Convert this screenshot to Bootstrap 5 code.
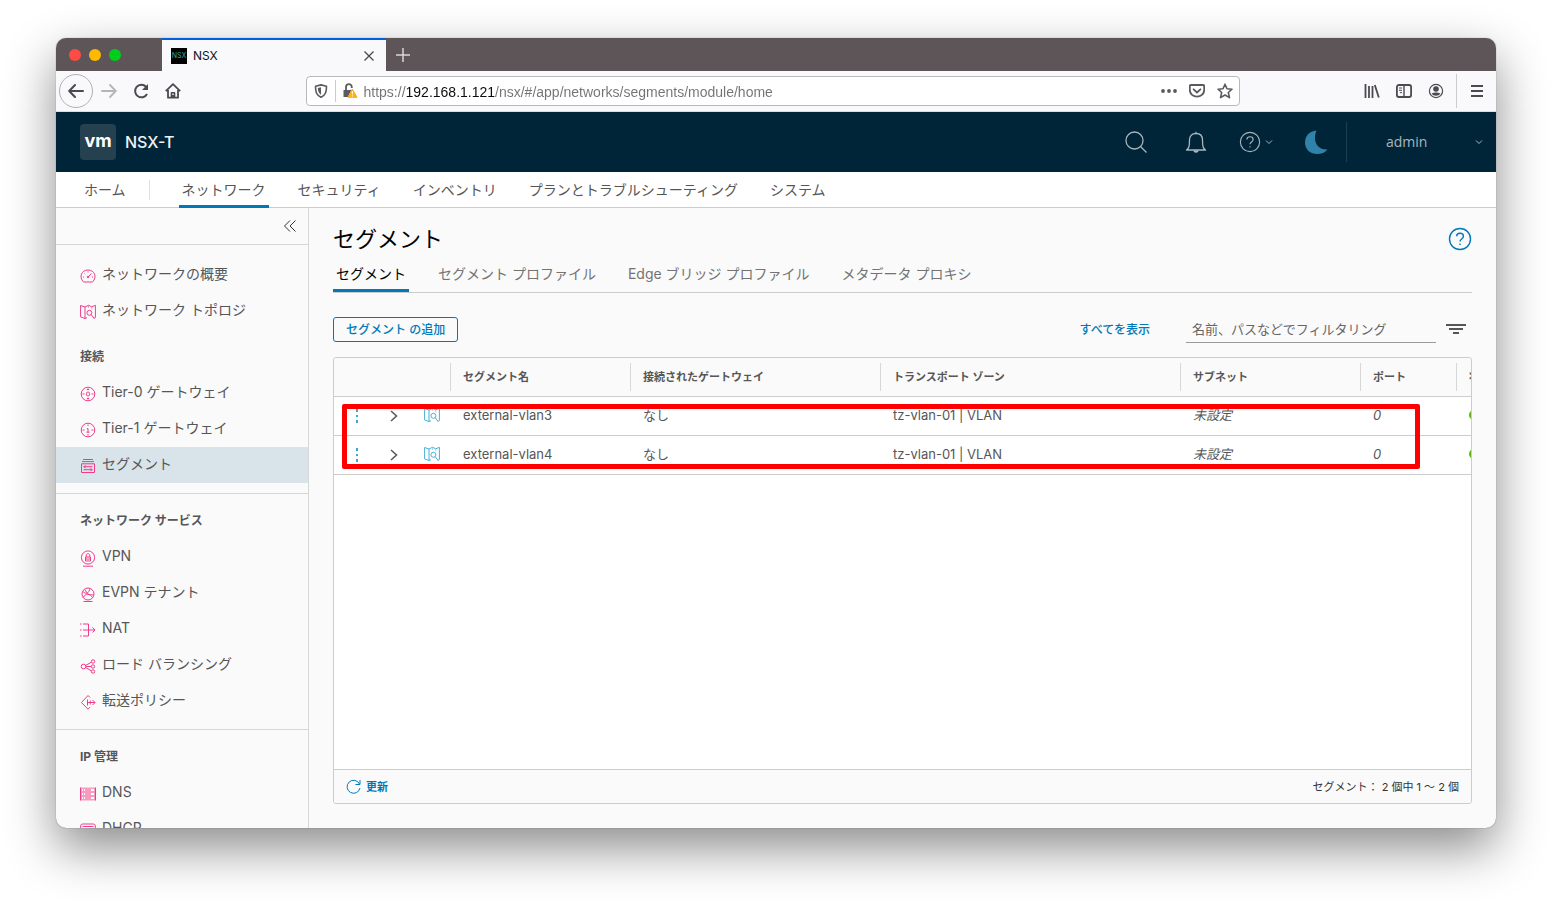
<!DOCTYPE html>
<html lang="ja">
<head>
<meta charset="utf-8">
<meta name="viewport" content="width=device-width, initial-scale=1">
<title>NSX</title>
<link href="https://cdn.jsdelivr.net/npm/bootstrap@5.3.0/dist/css/bootstrap.min.css" rel="stylesheet">
<style>
:root{--ink:#565656;--line:#ccc;--blue:#0079b8;--pink:#ee3d8b}
body{font-family:Inter,"Noto Sans CJK JP",sans-serif;font-size:14px;line-height:20px;color:var(--ink);background:#fff}
svg{display:block;flex:none;fill:none;stroke:currentColor}
svg.solid{stroke:none}
button{font-family:inherit}
.plain{background:none;border:0;padding:0;color:inherit;display:flex;align-items:center;justify-content:center}
.desktop{height:100vh;padding:38px 56px 74px}
.win{border-radius:10px;background:#fafafa;box-shadow:0 0 1px rgba(0,0,0,.6),0 20px 50px rgba(0,0,0,.46)}
.tabstrip,.tools,.masthead,.mainnav{flex:none}
.tabstrip{height:33px;background:#5d5557}
.lights{width:106px;padding-left:13px;gap:8px}
.lights button{width:12px;height:12px;border-radius:50%}
.red{background:#ff4b45}
.amber{background:#ffb900}
.green{background:#00ce1d}
.browser-tab{width:224px;background:#f9f9fb;border-top:2px solid #0060df;color:#15141a;font-size:12px;padding:0 10px 0 9px;gap:6px}
.browser-tab .plain{color:#4a4a4f}
.new-tab{width:33px;color:#d8d6d7}
.favicon{width:16px;height:16px;background:#000;color:#3aa99a;font-size:7px;line-height:16px;text-align:center}
.tools{height:41px;background:#f9f9fb;border-bottom:1px solid #ddd;color:#4a4a4f;padding:0 3px}
.tools .plain{width:32px;height:32px}
.tools .back{width:34px;height:34px;border:1px solid #b1b1b3;border-radius:50%}
.tools .forward{color:#b5b5b8}
.gapper{flex:1 1 0}
.urlbar{flex:8 1 0;min-width:0;height:30px;background:#fff;border:1px solid #b9b9bb;border-radius:4px}
.urlbar .plain{width:28px;height:28px;color:#5a5a5f}
.urlbar input{min-width:0;border:0;outline:0;padding:2px 0 0;font-family:"Liberation Sans",sans-serif;font-size:14px;line-height:26px;background:linear-gradient(90deg,#737373 43px,#0c0c0d 43px,#0c0c0d 131px,#737373 131px);-webkit-background-clip:text;background-clip:text;-webkit-text-fill-color:transparent}
.split{width:1px;background:var(--line)}
.urlbar .split{height:22px}
.tools .tall{height:34px}
.masthead{height:60px;background:#002538;color:#a9b6be;padding-left:24px}
.vm{width:36px;height:36px;border-radius:4px;background:#25404f;color:#fff;font-size:18px;line-height:34px;font-weight:700;text-align:center;margin-right:9px}
.product{font-size:16px;font-weight:500;color:#f0f3f4}
.masthead .icon-btn{width:60px;height:60px}
.user{width:150px;height:40px;border-left:1px solid #1c4053;padding:0 13px 0 39px;justify-content:space-between;font-family:"Open Sans",sans-serif}
.mainnav{height:36px;background:#fff;border-bottom:1px solid var(--line);padding-left:25px}
.strip{gap:26px}
.strip a{color:var(--ink);text-decoration:none;padding:0 3px;white-space:nowrap;border-bottom:3px solid transparent}
.mainnav .strip a{height:36px;line-height:35px}
.strip a.on{border-color:var(--blue)}
.mainnav .split{height:20px;margin:0 29px 0 20px;background:#e0e0e0}
.body-row{min-height:0}
.side{width:253px;border-right:1px solid #d7d7d7;flex:none;overflow:hidden}
.side .collapse-row{height:37px;border-bottom:1px solid #d7d7d7;padding-right:11px;margin-bottom:12px;color:#333}
.side section{padding-bottom:10px}
.side .ruled{border-top:1px solid #d7d7d7;padding-top:9px}
.side h2{font-size:12px;font-weight:700;line-height:36px;margin:0;padding-left:24px}
.side a{height:36px;line-height:34px;display:flex;gap:6px;padding-left:24px;color:var(--ink);text-decoration:none}
.side a svg{color:var(--pink);margin-top:11px}
.side a.on{background:#d9e4ea}
.content{padding:17px 24px 24px;min-width:0}
.content h1{font-size:22px;line-height:28px;color:#000;margin:0;font-weight:400}
.subtabs{border-bottom:1px solid var(--line);height:36px}
.subtabs a{line-height:34px;height:35px;color:#737373}
.subtabs a.on{color:#000}
.actions{height:25px;margin:24px 0 15px}
.btn-seg{height:25px;border:1px solid var(--blue);border-radius:3px;padding:0 12px;color:var(--blue);font-size:12px;line-height:22px;font-weight:500;background:none}
.show-all{font-size:12px;font-weight:500;color:var(--blue);text-decoration:none;margin-right:36px}
.filter{width:250px;height:26px;border:0;border-bottom:1px solid #9a9a9a;background:none;outline:0;padding:0 6px;font-size:13px}
.filter::placeholder{color:#666;opacity:1}
.help-link{color:var(--blue)}
.gridbox{border:1px solid var(--line);border-radius:3px;background:#fff;min-height:0}
.clip{overflow:hidden;border-radius:3px}
.seg-table{table-layout:fixed;width:100%;min-width:1222px;border-collapse:separate;border-spacing:0;font-size:13px}
.seg-table th{height:39px;background:#fafafa;border-bottom:1px solid var(--line);padding:0;font-size:11px;font-weight:700;white-space:nowrap}
.seg-table th span{display:block;height:28px;line-height:28px;padding-left:12px;border-left:1px solid #d7d7d7}
.seg-table td{height:39px;padding:0 0 2px 13px;border-bottom:1px solid var(--line);white-space:nowrap}
.seg-table td.tool{padding:0 0 1px}
.seg-table td.kind{padding:0 0 2px 16px;color:#49afd9}
.seg-table .plain{width:100%}
.seg-table .dots{color:#3ba7d4}
.pin{width:10px;height:10px;border-radius:50%;background:#60b515}
.c-act{width:46px}.c-exp{width:28px}.c-kind{width:42px}.c-mid{width:180px}.c-gw{width:250px}.c-tz{width:300px}.c-port{width:96px}
.gridfoot{height:34px;border-top:1px solid var(--line);background:#fafafa;padding:0 12px;font-size:11px;color:#313131;border-radius:0 0 3px 3px}
.gridfoot button{color:var(--blue);font-weight:600;gap:5px}
.callout{position:absolute;left:8px;right:51px;top:46px;height:65px;border:5px solid #f00;border-radius:2px;pointer-events:none}
</style>
</head>
<body>
<svg width="0" height="0" class="position-absolute" aria-hidden="true">
<symbol id="topo" viewBox="0 0 16 16"><path d="M.6 1.500 5 3v11.500L.6 12.900zM5 14.500l2-.8M5 3l3.500-1.700 3.300 1.500 3.600-1.500v12.200l-1 .4"/><path d="M8.500 1.500V4M11.800 3v2.500" stroke-opacity=".5"/><circle cx="9.400" cy="8.800" r="2.500"/><path d="m11.200 10.600 3.300 4.400"/></symbol>
<symbol id="help" viewBox="0 0 24 24"><circle cx="12" cy="12" r="10.500"/><path d="M8.600 9.300C8.700 7.400 10.100 6.300 12 6.300s3.400 1.200 3.400 3c0 2.700-3.400 2.600-3.400 5.200M12 16.500v1.600"/></symbol>
<symbol id="down" viewBox="0 0 8 6"><path d="m1 1.500 3 3 3-3"/></symbol>
<symbol id="kebab" viewBox="0 0 4 16"><path d="M1 1h2v3H1zM1 7h2v2H1zM1 12h2v3H1z" fill="currentColor"/></symbol>
<symbol id="expand" viewBox="0 0 10 12"><path d="m2 1 5.500 5L2 11"/></symbol>
</svg>
<div class="desktop">
<div class="win d-flex flex-column h-100 overflow-hidden">
  <div class="tabstrip d-flex">
    <div class="lights d-flex align-items-center">
      <button class="plain red" aria-label="閉じる"></button><button class="plain amber" aria-label="最小化"></button><button class="plain green" aria-label="最大化"></button>
    </div>
    <div class="browser-tab d-flex align-items-center">
      <span class="favicon">NSX</span><span class="me-auto">NSX</span>
      <button class="plain" aria-label="タブを閉じる"><svg width="14" height="14" viewBox="0 0 14 14" stroke-width="1.300"><path d="m2.500 2.500 9 9M11.500 2.500l-9 9"/></svg></button>
    </div>
    <button class="plain new-tab" aria-label="新しいタブ"><svg width="16" height="16" viewBox="0 0 16 16" stroke-width="1.500"><path d="M8 1v14M1 8h14"/></svg></button>
  </div>
  <div class="tools d-flex align-items-center">
    <button class="plain back" aria-label="戻る"><svg width="16" height="16" viewBox="0 0 16 16" stroke-width="2" stroke-linecap="round" stroke-linejoin="round"><path d="M15 8H1.500M7 2 1.200 8 7 14"/></svg></button>
    <button class="plain forward" aria-label="進む"><svg width="16" height="16" viewBox="0 0 16 16" stroke-width="1.800" stroke-linecap="round" stroke-linejoin="round"><path d="M1 8h13.500M9 2l5.800 6L9 14"/></svg></button>
    <button class="plain" aria-label="再読み込み"><svg width="16" height="16" viewBox="0 0 16 16" stroke-width="2"><path d="M13 3.700A6.300 6.300 0 1 0 14 11"/><path d="M15 1v6H9z" fill="currentColor" stroke="none"/></svg></button>
    <button class="plain" aria-label="ホーム"><svg width="16" height="16" viewBox="0 0 16 16" stroke-width="1.800" stroke-linejoin="round"><path d="M.8 8.200 8 1.200l7.200 7M3 7v7.700h10V7"/><path d="M6.500 14.500V9.800h3v4.700M8 12v2.500" stroke-width="1.600"/></svg></button>
    <div class="gapper"></div>
    <div class="urlbar d-flex align-items-center">
      <button class="plain" aria-label="サイト保護"><svg width="14" height="14" viewBox="0 0 14 14" stroke-width="1.600" stroke-linejoin="round"><path d="M7 .9 1.500 2.300c0 5.500.8 8.800 5.500 11 4.700-2.200 5.500-5.500 5.500-11z"/><path d="M7 3.200v7.600c-2.300-1.500-3-3.500-3.200-6.800z" fill="currentColor" stroke="none"/></svg></button>
      <div class="split"></div>
      <button class="plain" aria-label="接続の警告"><svg width="16" height="16" viewBox="0 0 16 16" stroke-width="1.800"><path d="M4 8V4.200C4 .2 9.800.2 9.800 4.200V5"/><path d="M1.500 7h8L6 14H1.500z" fill="currentColor" stroke="none"/><path d="M10.300 6 6 14.300h9z" fill="#ffab1a" stroke="#ffab1a" stroke-width="1" stroke-linejoin="round"/><path d="M10.400 8.300v3M10.400 12.300v1.200" stroke="#fff" stroke-width="1.200"/></svg></button>
      <input class="flex-grow-1" type="text" aria-label="アドレス" value="https://192.168.1.121/nsx/#/app/networks/segments/module/home">
      <button class="plain" aria-label="ページ操作"><svg class="solid" width="16" height="16" viewBox="0 0 16 16"><g fill="currentColor"><circle cx="2" cy="8" r="1.900"/><circle cx="8" cy="8" r="1.900"/><circle cx="14" cy="8" r="1.900"/></g></svg></button>
      <button class="plain" aria-label="Pocket"><svg width="16" height="16" viewBox="0 0 16 16" stroke-width="1.800" stroke-linejoin="round" stroke-linecap="round"><path d="M2 2h12c1 0 1.200.5 1.200 1.200v3.600c0 9-14.400 9-14.400 0V3.200C.8 2.500 1 2 2 2zM4.600 6.300 8 9.500l3.400-3.200"/></svg></button>
      <button class="plain" aria-label="ブックマーク"><svg width="16" height="16" viewBox="0 0 16 16" stroke-width="1.600" stroke-linejoin="round"><path d="m8 1.200 2 4.600 5 .4-3.700 3.300 1.200 5.100L8 12l-4.500 2.600 1.200-5.100L1 6.200l5-.4z"/></svg></button>
    </div>
    <div class="gapper"></div>
    <button class="plain" aria-label="ライブラリ"><svg width="16" height="16" viewBox="0 0 16 16" stroke-width="1.800"><path d="M1.500 1v14M5 3v12M8.500 3v12M10.800 2l4 12.600"/></svg></button>
    <button class="plain" aria-label="サイドバー"><svg width="16" height="16" viewBox="0 0 16 16" stroke-width="1.800"><rect x=".9" y="2" width="14.200" height="12" rx="2"/><path d="M8 2v12" stroke-width="1.400"/><path d="M3 5h3M3 7.300h3M4 9.600h2" stroke-width="1"/></svg></button>
    <button class="plain" aria-label="アカウント"><svg width="16" height="16" viewBox="0 0 16 16" stroke-width="1.200"><circle cx="8" cy="8" r="6.600"/><circle cx="8" cy="6" r="2.800" fill="currentColor" stroke="none"/><path d="M3.600 10.500C6 9.200 10 9.200 12.400 10.500 10.500 13.500 5.500 13.500 3.600 10.500z" fill="currentColor" stroke="none"/></svg></button>
    <div class="split tall mx-1"></div>
    <button class="plain" aria-label="メニュー"><svg width="14" height="14" viewBox="0 0 14 14" stroke-width="2"><path d="M1 2h12M1 7h12M1 12h12"/></svg></button>
  </div>

  <header class="masthead d-flex align-items-center">
    <span class="vm">vm</span><span class="product me-auto">NSX-T</span>
    <button class="plain icon-btn" aria-label="検索"><svg width="24" height="24" viewBox="0 0 24 24" stroke-width="1.300"><circle cx="10.500" cy="10.500" r="8.500"/><path d="m16.500 16.500 6 6"/></svg></button>
    <button class="plain icon-btn" aria-label="通知"><svg width="22" height="24" viewBox="0 0 22 24" stroke-width="1.300" stroke-linejoin="round"><path d="M1.500 20c2.500-1.800 3-3.500 3-10C4.500 5.800 7 3.500 11 3.500s6.500 2.300 6.500 6.500c0 6.500.5 8.200 3 10zM11 3.500V1.800"/><path d="M8.800 20.500a2.300 2.300 0 0 0 4.400 0" fill="currentColor"/></svg></button>
    <button class="plain icon-btn" aria-label="ヘルプ"><svg width="22" height="22" stroke-width="1.200"><use href="#help"/></svg><svg class="ms-1" width="8" height="6"><use href="#down"/></svg></button>
    <button class="plain icon-btn" aria-label="ダークモード"><svg class="solid" width="24" height="24" viewBox="0 0 24 24"><path d="M12.500.5C5.500 1 1 6 1 12.500 1 19.500 6.500 24 13 24c4.500 0 8-1.500 10.500-4.500-7.500.5-12-4-12.500-10.500-.1-3 .3-6 1.500-8.500z" fill="#2f83a8"/></svg></button>
    <button class="plain user"><span>admin</span><svg width="8" height="6"><use href="#down"/></svg></button>
  </header>

  <nav class="mainnav d-flex align-items-start">
    <div class="strip d-flex"><a href="#">ホーム</a></div><div class="split align-self-center"></div>
    <div class="strip d-flex"><a class="on" href="#">ネットワーク</a><a href="#">セキュリティ</a><a href="#">インベントリ</a><a href="#">プランとトラブルシューティング</a><a href="#">システム</a></div>
  </nav>

  <div class="body-row d-flex flex-grow-1">
    <aside class="side">
      <div class="collapse-row d-flex align-items-center justify-content-end"><button class="plain" aria-label="折りたたむ"><svg width="14" height="14" viewBox="0 0 14 14"><path d="M7 1.500 1.500 7 7 12.500M12.500 1.500 7 7l5.500 5.500"/></svg></button></div>
      <section>
        <a href="#"><svg width="16" height="16" viewBox="0 0 16 16"><path d="M3.500 14h9C17.500 9 14.500 2 8 2S-1.500 9 3.500 14zM8.300 9l3-3.500M8 3.500v1M3 9h1M12 9h1M4.500 5.500l.7.700"/><circle cx="8" cy="9" r=".8" fill="currentColor"/></svg>ネットワークの概要</a>
        <a href="#"><svg width="16" height="16"><use href="#topo"/></svg>ネットワーク トポロジ</a>
      </section>
      <section>
        <h2>接続</h2>
        <a href="#"><svg width="16" height="16" viewBox="0 0 16 16"><circle cx="8" cy="8" r="6.800"/><rect x="6.500" y="6.200" width="3" height="3.600" rx="1"/><path d="M2.500 8h2M11.500 8h2M8 2.500v1.800M8 11.700v1.800M6.800 3.500h2.400M6.800 12.500h2.400"/></svg>Tier-0 ゲートウェイ</a>
        <a href="#"><svg width="16" height="16" viewBox="0 0 16 16"><circle cx="8" cy="8" r="6.800"/><path d="M6.800 6.600H8v3.600M6.500 10.200h3M2.500 8h2M11.500 8h2M8 2.500v1.500M8 12v1.500"/></svg>Tier-1 ゲートウェイ</a>
        <a class="on" href="#"><svg width="16" height="16" viewBox="0 0 16 16"><path d="M3 1.500h10M2 3.600h12M1.500 5.800h13v8.700h-13zM3.500 8.700h9M5.500 7.200 4 8.700l1.500 1.500M3.500 11.700h9M10.500 10.200l1.500 1.500-1.500 1.500"/></svg>セグメント</a>
      </section>
      <section class="ruled">
        <h2>ネットワーク サービス</h2>
        <a href="#"><svg width="16" height="17" viewBox="0 0 16 17"><circle cx="8" cy="7.500" r="6.600"/><path d="M5.500 7h5v4h-5zM6.300 7V5.200c0-2 3.400-2 3.400 0V7M5.500 9h5M3 16.200h10"/></svg>VPN</a>
        <a href="#"><svg width="16" height="17" viewBox="0 0 16 17"><circle cx="8" cy="8" r="6"/><path d="M3 5.500C6 9 9 7 10 2.500M3 11.500c3-4.500 7-4 9.500 0M5 3.500c1.500 4 5 6.500 8.500 5M3.500 15.500h9"/></svg>EVPN テナント</a>
        <a href="#"><svg width="16" height="16" viewBox="0 0 16 16"><path d="M0 2h1.500M3 2h5.500v12H3M0 14h1.500M0 8h1.500M3 8h12M12.500 5.500 15 8l-2.500 2.500"/></svg>NAT</a>
        <a href="#"><svg width="16" height="16" viewBox="0 0 16 16"><circle cx="3.500" cy="8.500" r="2.300"/><circle cx="13" cy="3.500" r="1.700"/><circle cx="13" cy="8.500" r="1.700"/><circle cx="13" cy="13.500" r="1.700"/><path d="M5.500 7.500 11.400 4.200M5.800 8.500h5.500M5.500 9.500l5.900 3.300"/></svg>ロード バランシング</a>
        <a href="#"><svg width="16" height="16" viewBox="0 0 16 16"><path d="M10 3.500 8 1.500 1.500 8.500 8 15.200l2-2M7.500 5.500v6M7.500 8.500H15M12.500 6 15 8.500 12.500 11M10.300 6.500v4"/></svg>転送ポリシー</a>
      </section>
      <section class="ruled">
        <h2>IP 管理</h2>
        <a href="#"><svg width="16" height="16" viewBox="0 0 16 16"><path d="M.5 1.500h15v13H.5z" fill="#f79bc0" stroke="none"/><path d="M.5 1.500v13M15.500 1.500v13"/><path d="M2 4h1M4 4h1M11 4h3M2 8h1M4 8h1M11 8h3M2 12h1M4 12h1M11 12h3" stroke="#fff" stroke-width="2"/></svg>DNS</a>
        <a href="#"><svg width="16" height="16" viewBox="0 0 16 16"><rect x=".7" y="2" width="14.600" height="12" rx="2"/><path d="M2.500 4.500h11M3 8h10"/></svg>DHCP</a>
      </section>
    </aside>

    <main class="content d-flex flex-column flex-grow-1">
      <div class="d-flex justify-content-between align-items-center"><h1>セグメント</h1><button class="plain help-link" aria-label="ヘルプ"><svg width="24" height="24" stroke-width="1.400"><use href="#help"/></svg></button></div>
      <nav class="subtabs strip d-flex mt-1"><a class="on" href="#">セグメント</a><a href="#">セグメント プロファイル</a><a href="#">Edge ブリッジ プロファイル</a><a href="#">メタデータ プロキシ</a></nav>
      <div class="actions d-flex align-items-center">
        <button class="btn-seg me-auto">セグメント の追加</button>
        <a class="show-all" href="#">すべてを表示</a>
        <input class="filter" type="text" aria-label="フィルタ" placeholder="名前、パスなどでフィルタリング">
        <button class="plain ms-2 me-1" aria-label="フィルタ条件"><svg width="24" height="16" viewBox="0 0 24 16" stroke-width="2"><path d="M2 3h20M5 7h14M9 11h6"/></svg></button>
      </div>
      <div class="gridbox position-relative d-flex flex-column flex-grow-1">
        <div class="clip flex-grow-1">
          <table class="seg-table">
            <colgroup><col class="c-act"><col class="c-exp"><col class="c-kind"><col class="c-mid"><col class="c-gw"><col class="c-tz"><col class="c-mid"><col class="c-port"><col></colgroup>
            <thead><tr><th colspan="3"></th><th><span>セグメント名</span></th><th><span>接続されたゲートウェイ</span></th><th><span>トランスポート ゾーン</span></th><th><span>サブネット</span></th><th><span>ポート</span></th><th><span>状態</span></th></tr></thead>
            <tbody>
              <tr><td class="tool"><button class="plain dots" aria-label="操作"><svg class="solid" width="4" height="16"><use href="#kebab"/></svg></button></td><td class="tool"><button class="plain" aria-label="展開"><svg width="10" height="12" stroke-width="1.500"><use href="#expand"/></svg></button></td><td class="kind"><svg width="16" height="16"><use href="#topo"/></svg></td><td>external-vlan3</td><td>なし</td><td>tz-vlan-01 | VLAN</td><td><i>未設定</i></td><td><i>0</i></td><td><div class="pin"></div></td></tr>
              <tr><td class="tool"><button class="plain dots" aria-label="操作"><svg class="solid" width="4" height="16"><use href="#kebab"/></svg></button></td><td class="tool"><button class="plain" aria-label="展開"><svg width="10" height="12" stroke-width="1.500"><use href="#expand"/></svg></button></td><td class="kind"><svg width="16" height="16"><use href="#topo"/></svg></td><td>external-vlan4</td><td>なし</td><td>tz-vlan-01 | VLAN</td><td><i>未設定</i></td><td><i>0</i></td><td><div class="pin"></div></td></tr>
            </tbody>
          </table>
        </div>
        <div class="gridfoot d-flex align-items-center justify-content-between"><button class="plain"><svg width="15" height="16" viewBox="0 0 15 16"><path d="M13.500 5A6.500 6.500 0 1 0 14 9M14 1v4.500H9.500"/></svg>更新</button><span>セグメント： 2 個中 1 〜 2 個</span></div>
        <div class="callout"></div>
      </div>
    </main>
  </div>
</div>
</div>
<script src="https://cdn.jsdelivr.net/npm/bootstrap@5.3.0/dist/js/bootstrap.bundle.min.js"></script>
</body>
</html>
